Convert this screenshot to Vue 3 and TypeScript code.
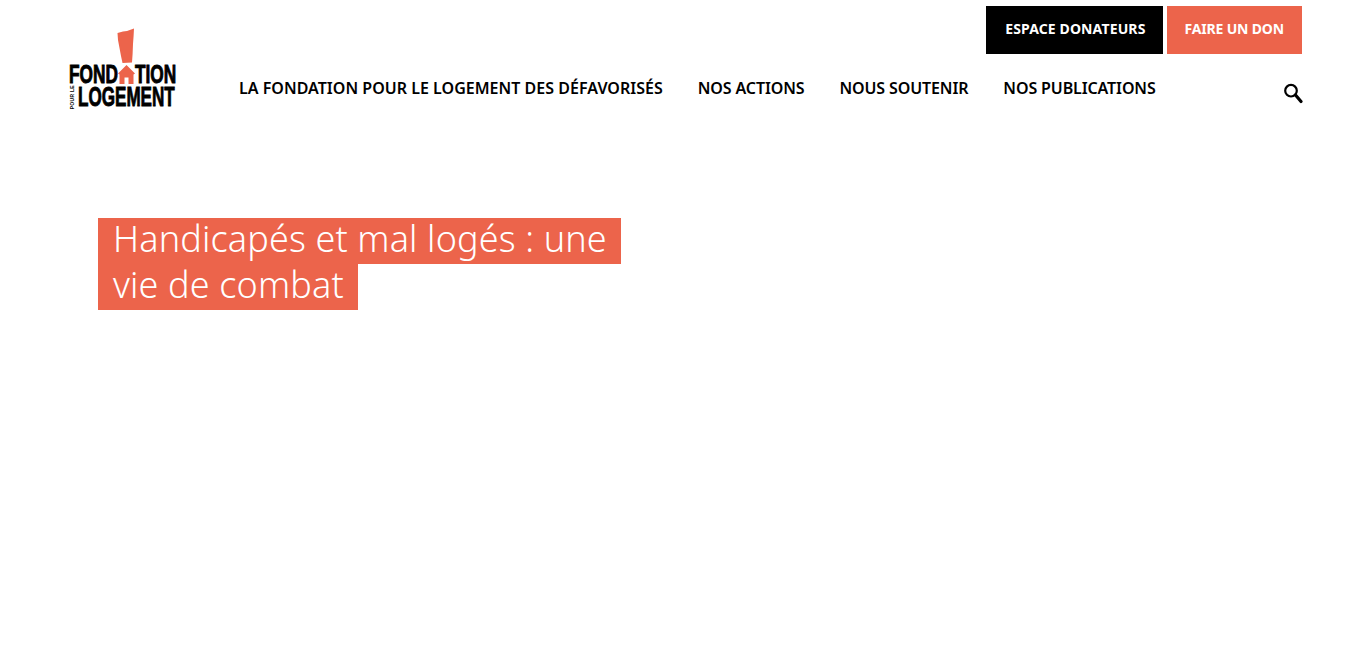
<template>
  <div class="page">
    <header class="site-header">
      <a class="logo" href="#">
        <svg class="logo-mark" width="18" height="36" viewBox="0 0 18 36">
          <path d="M0.5 5 L6 3.5 L10 3 L17 0.5 L16.6 8 L16 16 L15.6 26 L15 34.5 L5.5 35 L4 28 L2.5 20 L1 12 Z" fill="#ec644b" />
        </svg>
        <div class="logo-line line-one">
          <span class="logo-word word-fond">FOND</span>
          <svg class="logo-house" width="17" height="19" viewBox="0 0 17 19">
            <path d="M8.5 0 L17 8.5 L15.5 9.5 L15.5 19 L10.5 19 L10.5 12.5 L6.5 12.5 L6.5 19 L1.5 19 L1.5 9.5 L0 8.5 Z" fill="#ec644b" />
          </svg>
          <span class="logo-word word-tion">TION</span>
        </div>
        <div class="logo-line line-two">
          <span class="logo-small">POUR LE</span>
          <span class="logo-word word-logement">LOGEMENT</span>
        </div>
      </a>

      <div class="header-main">
        <div class="top-buttons">
          <a class="btn btn-black" href="#">ESPACE DONATEURS</a>
          <a class="btn btn-orange" href="#">FAIRE UN DON</a>
        </div>
        <div class="nav-row">
          <nav class="main-nav">
            <a v-for="item in navItems" :key="item" href="#">{{ item }}</a>
          </nav>
          <svg class="search-icon" width="20" height="21" viewBox="0 0 20 21" fill="none" stroke="#000">
            <circle cx="8" cy="7.7" r="5.8" stroke-width="2.2" />
            <line x1="12.5" y1="12" x2="18" y2="18.5" stroke-width="3.2" stroke-linecap="round" />
          </svg>
        </div>
      </div>
    </header>

    <main class="content">
      <h1 class="page-title">
        <span v-for="line in titleLines" :key="line" class="title-line">{{ line }}</span>
      </h1>
    </main>
  </div>
</template>

<script setup lang="ts">
const navItems: string[] = [
  'LA FONDATION POUR LE LOGEMENT DES DÉFAVORISÉS',
  'NOS ACTIONS',
  'NOUS SOUTENIR',
  'NOS PUBLICATIONS',
]

const titleLines: string[] = ['Handicapés et mal logés : une', 'vie de combat']
</script>

<style>
html,
body {
  background: #fff;
}
</style>

<style scoped>
.page {
  height: 651px;
  overflow: hidden;
  font-family: 'Noto Sans', sans-serif;
  background: #fff;
}

a {
  text-decoration: none;
  color: inherit;
}

/* ─── Header ─── */
.site-header {
  display: flex;
  height: 132px;
  padding: 0 63px 0 69px;
}

.logo {
  display: flex;
  flex-direction: column;
  width: 108px;
  padding-top: 28px;
  flex-shrink: 0;
}

.logo-mark {
  display: block;
  margin-left: 48px;
  flex-shrink: 0;
}

.logo-line {
  display: flex;
  align-items: center;
  font-family: 'Liberation Sans', sans-serif;
  font-weight: 700;
  color: #000;
}

.line-one {
  height: 19px;
  margin-top: 1px;
}

.line-two {
  height: 20px;
  margin-top: 3px;
}

.logo-word {
  display: inline-block;
  transform-origin: left center;
  white-space: nowrap;
  -webkit-text-stroke: 0.9px #000;
}

.word-fond {
  width: 49px;
  font-size: 25px;
  line-height: 19px;
  transform: scaleX(0.69);
}

.logo-house {
  flex-shrink: 0;
}

.word-tion {
  width: 42px;
  font-size: 25px;
  line-height: 19px;
  transform: scaleX(0.69);
}

.logo-small {
  writing-mode: vertical-rl;
  transform: rotate(180deg);
  width: 6px;
  margin-right: 3px;
  font-size: 5px;
  line-height: 6px;
  letter-spacing: 0.3px;
  white-space: nowrap;
}

.word-logement {
  font-size: 28px;
  line-height: 20px;
  transform: scaleX(0.61);
}

.header-main {
  flex: 1;
  min-width: 0;
  margin-left: 62px;
}

.top-buttons {
  display: flex;
  justify-content: flex-end;
  gap: 4px;
  padding-top: 6px;
  margin-right: 1px;
}

.btn {
  display: block;
  height: 48px;
  line-height: 46px;
  font-size: 14px;
  font-weight: 700;
  color: #fff;
  white-space: nowrap;
}

.btn-black {
  padding: 0 17px 0 19px;
  letter-spacing: 0.13px;
  background: #000;
}

.btn-orange {
  padding: 0 18px;
  letter-spacing: -0.17px;
  background: #ec644b;
}

.nav-row {
  display: flex;
  justify-content: space-between;
  align-items: flex-start;
  margin-top: 23px;
}

.main-nav {
  display: flex;
  gap: 35px;
  font-size: 16px;
  font-weight: 600;
  line-height: 22px;
  color: #000;
  white-space: nowrap;
}

.main-nav a:first-child {
  letter-spacing: 0.02px;
}

.main-nav a:not(:first-child) {
  letter-spacing: -0.12px;
}

.search-icon {
  display: block;
  margin-top: 6px;
}

/* ─── Content ─── */
.content {
  padding: 86px 0 0 98px;
}

.page-title {
  margin: 0;
  font-size: 36px;
  font-weight: 300;
  line-height: 42px;
  letter-spacing: 0.14px;
  color: #fff;
}

.title-line {
  display: block;
  width: fit-content;
  height: 46px;
  padding: 0 14px 0 15px;
  background: #ec644b;
  white-space: nowrap;
}
</style>
